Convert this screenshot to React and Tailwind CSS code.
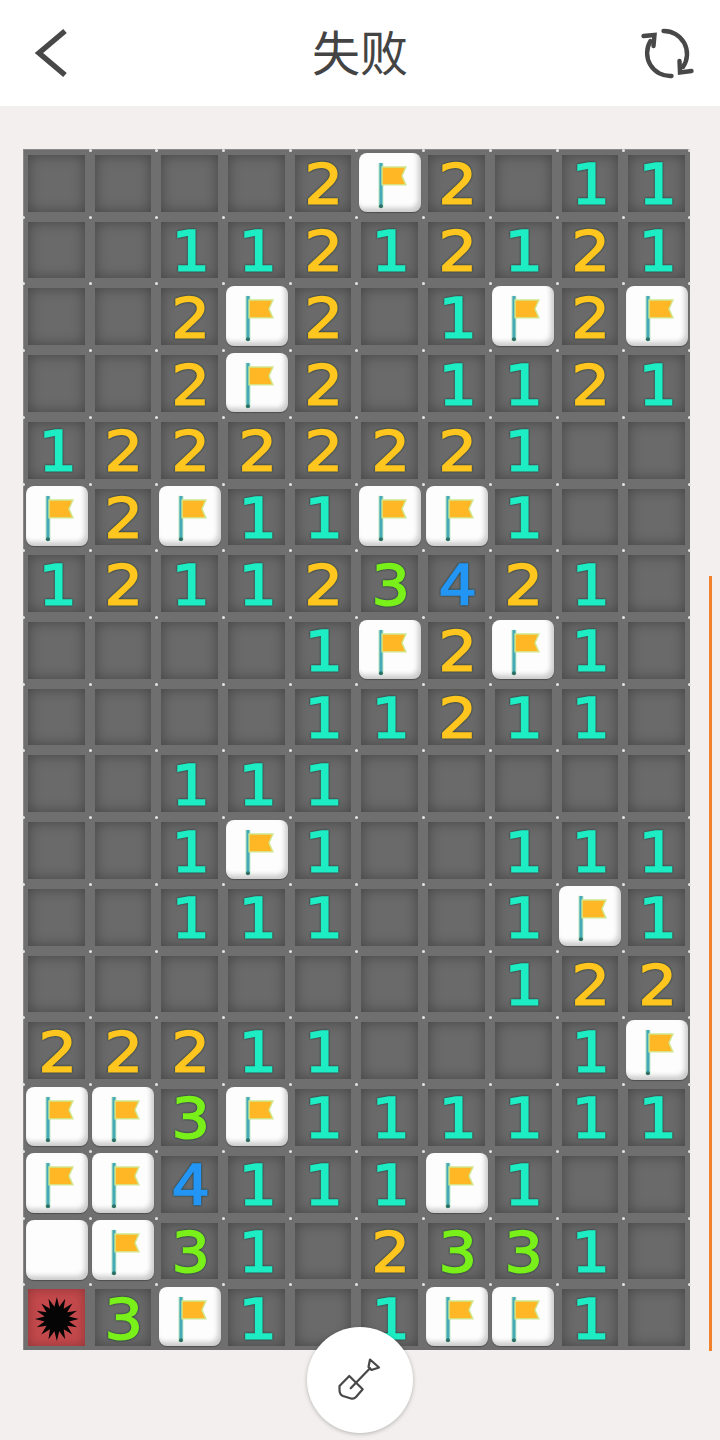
import React from "react"

const board = [
  "____2F2_11",
  "__11212121",
  "__2F2_1F2F",
  "__2F2_1121",
  "12222221__",
  "F2F11FF1__",
  "121123421_",
  "____1F2F1_",
  "____11211_",
  "__111_____",
  "__1F1__111",
  "__111__1F1",
  "_______122",
  "22211___1F",
  "FF3F111111",
  "FF4111F1__",
  "WF31_2331_",
  "B3F1_1FF1_",
]

const digitClass = {
  1: "text-[#1eedc4]",
  2: "text-[#ffc61f]",
  3: "text-[#7af01a]",
  4: "text-[#2396f5]",
}

function spikes() {
  const pts = []
  for (let i = 0; i < 32; i++) {
    const r = i % 2 === 0 ? 22 : 12.5
    const a = (Math.PI * i) / 16
    pts.push(`${(28 + r * Math.sin(a)).toFixed(1)},${(28 - r * Math.cos(a)).toFixed(1)}`)
  }
  return pts.join(" ")
}

function Flag() {
  return (
    <svg viewBox="0 0 62 60" className="w-full h-full">
      <rect x="19.4" y="10" width="5" height="45" fill="#bfe8c4" />
      <rect x="20.4" y="10" width="3" height="44" fill="#45a9b8" />
      <circle cx="21.9" cy="53.5" r="2" fill="#2f6f66" />
      <path d="M23 14H47L43 23L47 32H23Z" fill="#ffb726" stroke="#cfe88e" strokeWidth="1.4" />
    </svg>
  )
}

function Tile({ flag }) {
  return (
    <div className="w-full h-full rounded-[8px] bg-[#fdfdfd] shadow-[inset_-3px_-4px_5px_rgba(0,0,0,0.2),0_1px_1px_rgba(0,0,0,0.3)]">
      {flag && <Flag />}
    </div>
  )
}

function Cell({ value, col, row }) {
  const isTile = value === "F" || value === "W"
  return (
    <div className={`relative ${isTile ? "pl-[2.5px] pr-[2.2px] pt-[3.5px] pb-[3.5px]" : "pl-[5px] pr-[5px] pt-[6px] pb-[4px]"}`}>
      {(col > 0 || row > 0) && (
        <span className="absolute left-[-1px] top-0 w-[3px] h-[3px] rounded-full bg-[#e4e4e4]" />
      )}
      {col === 9 && (
        <span className="absolute right-[-1px] top-0 w-[3px] h-[3px] rounded-full bg-[#e4e4e4]" />
      )}
      {isTile ? (
        <Tile flag={value === "F"} />
      ) : value === "B" ? (
        <div className="w-full h-full flex items-center justify-center pt-[2px] pl-[1px] bg-[#c4494c] shadow-[inset_0_0_12px_rgba(0,0,0,0.28)]">
          <svg viewBox="0 0 56 56" className="w-[56px] h-[56px] blur-[0.4px]">
            <polygon points={spikes()} fill="#050505" />
          </svg>
        </div>
      ) : (
        <div className="w-full h-full flex items-center justify-center pt-[2px] pl-[2px] bg-[#6a6a6a] shadow-[inset_0_0_14px_rgba(0,0,0,0.36)]">
          {value !== "_" && (
            <span className={`font-['DejaVu_Sans',sans-serif] text-[56px] leading-none scale-x-108 [-webkit-text-stroke:1.6px_currentColor] [filter:drop-shadow(0_0_1px_#12302e)] ${digitClass[value]}`}>
              {value}
            </span>
          )}
        </div>
      )}
    </div>
  )
}

export default function App() {
  return (
    <div className="relative w-[720px] h-[1440px] overflow-hidden bg-[#f2efee]">
      <header className="h-[106px] bg-white flex items-center justify-between pl-[33px] pr-[26px]">
        <div className="w-[47px]">
          <svg viewBox="0 0 36 52" className="w-[36px] h-[52px]" fill="none">
            <path d="M32 4L6 26L32 48" stroke="#484848" strokeWidth="5.5" strokeLinejoin="miter" />
          </svg>
        </div>
        <h1 className="font-['Noto_Sans_CJK_SC',sans-serif] text-[48px] leading-none text-[#444] font-normal pb-[6px]">失败</h1>
        <svg viewBox="0 0 54 54" className="w-[54px] h-[54px]" fill="none" stroke="#484848" strokeWidth="4.4" strokeLinecap="round">
          <path d="M23.5 5A23 23 0 0 1 43 41" />
          <path d="M39.5 35L40 46.5L51.5 45" strokeLinejoin="miter" />
          <path d="M31.5 50A23 23 0 0 1 10.5 15" />
          <path d="M3.5 10L14.5 9L13.5 20" strokeLinejoin="miter" />
        </svg>
      </header>

      <main className="mt-[43px] ml-[23px] w-[667px] grid grid-cols-10 auto-rows-[66.72px] bg-[#6f6f6f] shadow-[inset_0_1px_0_#8a8a8a,inset_1px_0_0_#8a8a8a]">
        {board.map((line, row) =>
          line.split("").map((value, col) => (
            <Cell key={`${row}-${col}`} value={value} row={row} col={col} />
          ))
        )}
      </main>

      <div className="absolute left-[709px] top-[576px] w-[3px] h-[775px] bg-[#f0822d]" />

      <button className="absolute left-[307px] top-[1327px] w-[106px] h-[106px] rounded-full bg-white flex items-center justify-center shadow-[0_1px_4px_rgba(0,0,0,0.25)]">
        <svg viewBox="0 0 44 44" className="w-[44px] h-[44px]" fill="none" stroke="#484848" strokeWidth="2.2" strokeLinejoin="round">
          <path d="M11.3 18L24.7 31.3L18 39A5 5 0 0 1 13 40.5L5 38Q1.5 36.5 1.5 32V28Z" />
          <path d="M12.7 30.3L32 10.3" strokeLinecap="round" />
          <path d="M32 1.5L41 9.5L33.5 12L30.5 9Z" />
        </svg>
      </button>
    </div>
  )
}
